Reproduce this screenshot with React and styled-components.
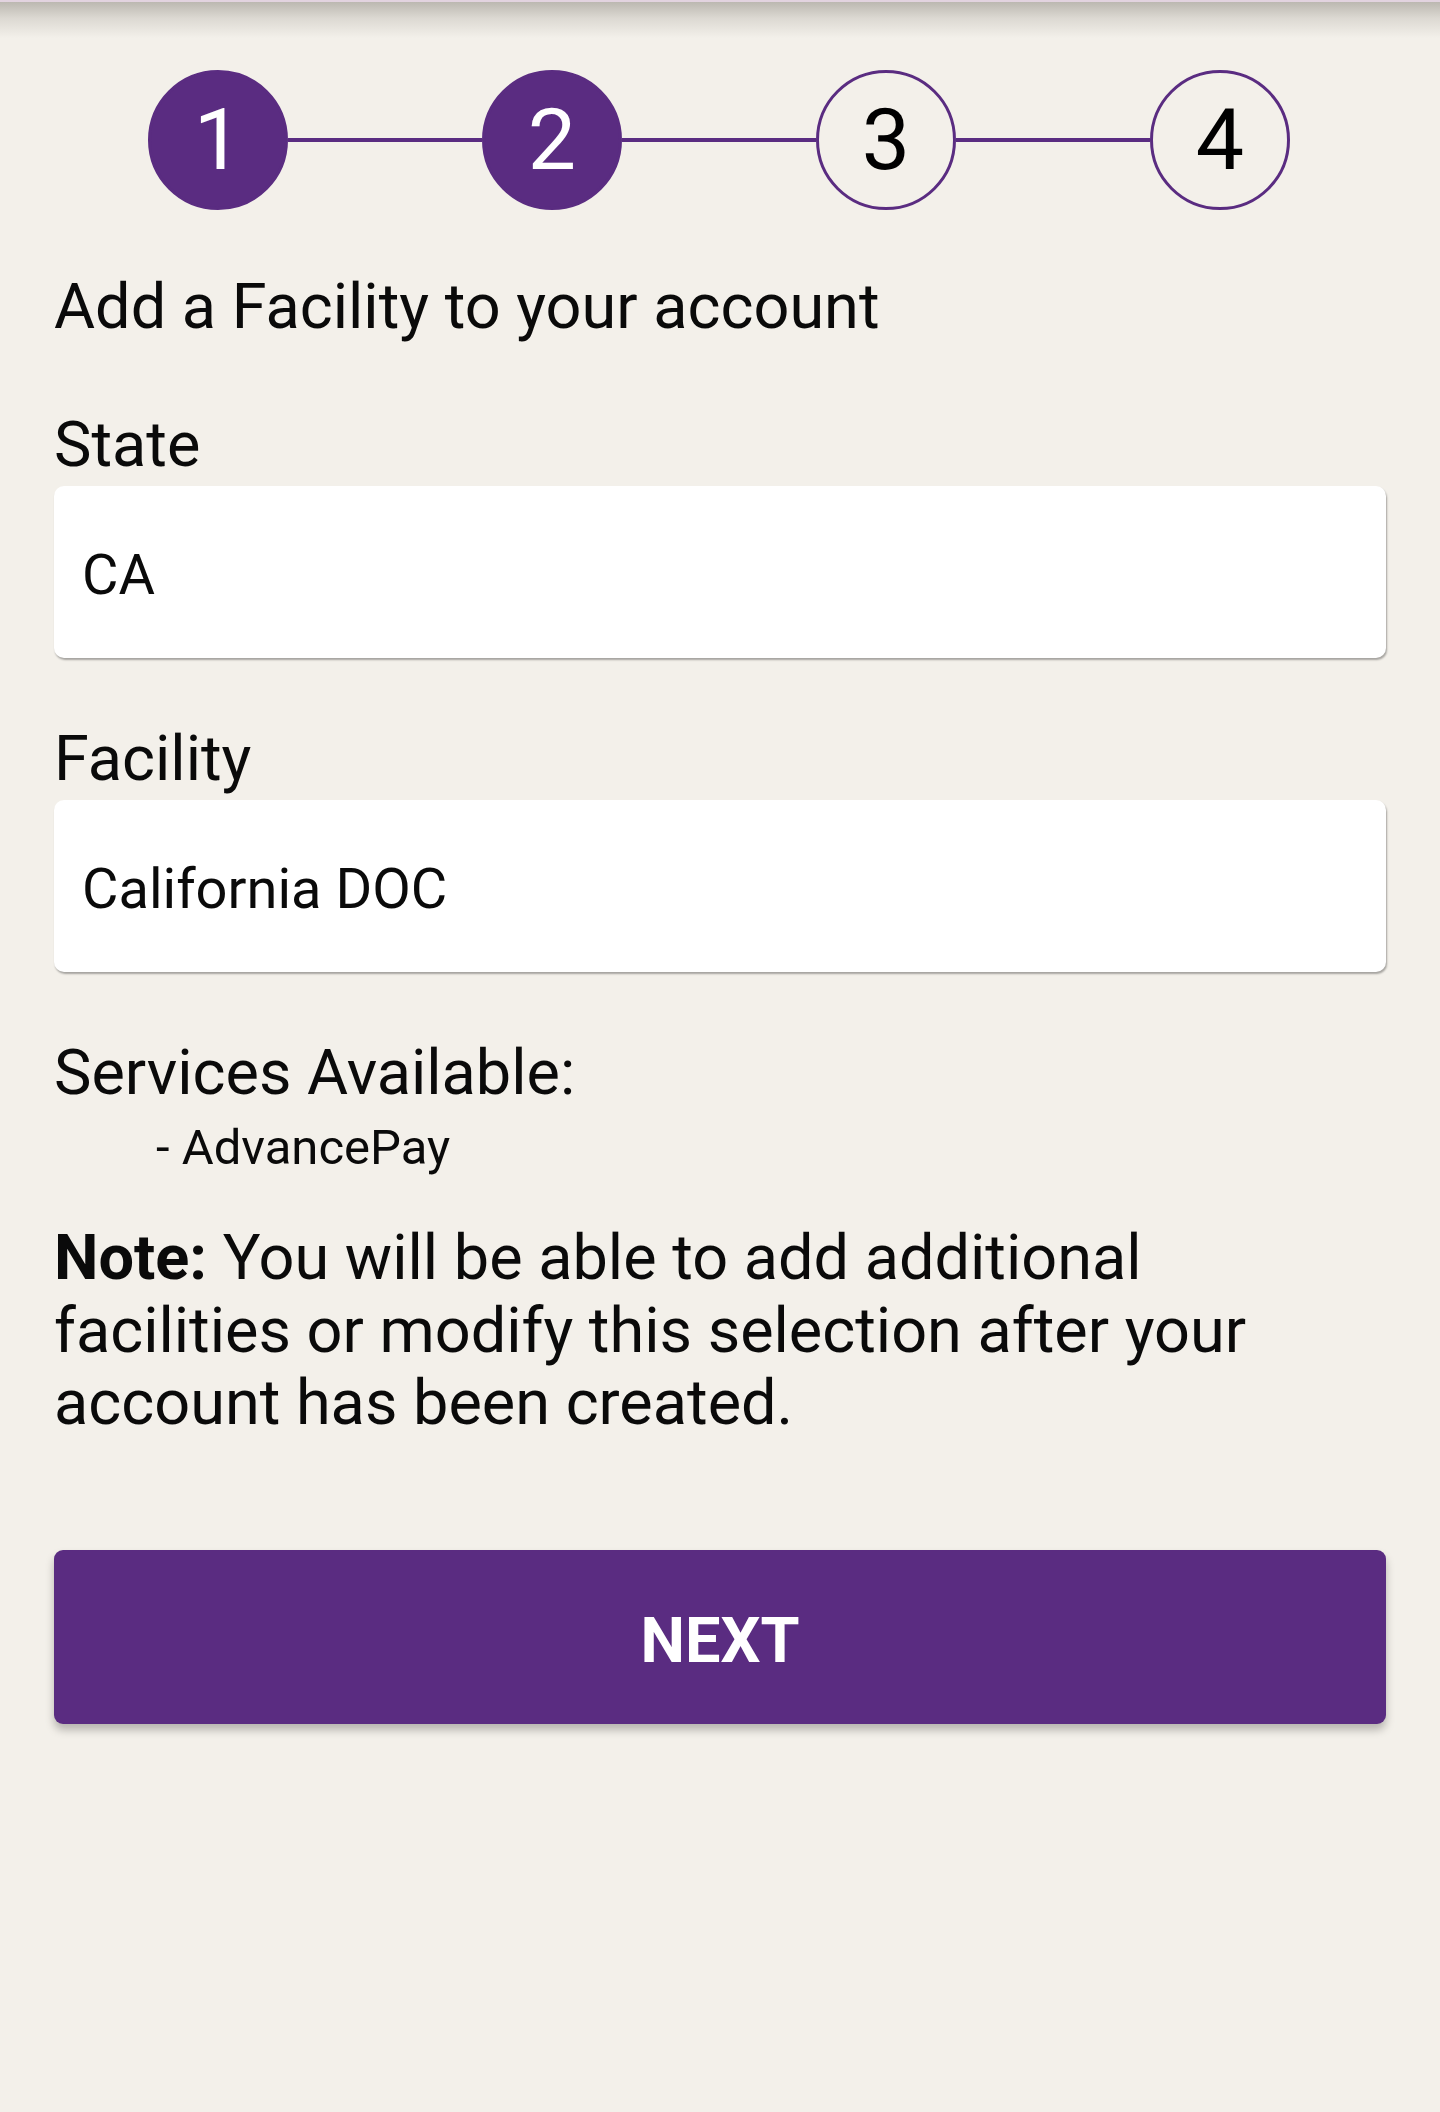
import React from 'react';
import styled, { createGlobalStyle } from 'styled-components';

const purple = '#5a2c81';

const GlobalStyle = createGlobalStyle`
	html, body {
		margin: 0;
		padding: 0;
		background: #f3f0ea;
	}
	body {
		font-family: Roboto, 'Noto Sans', Arial, sans-serif;
		color: #0a0a0a;
	}
`;

const steps = [
	{ n: 1, done: true },
	{ n: 2, done: true },
	{ n: 3, done: false },
	{ n: 4, done: false },
];

const App = () => {
	return (
		<>
			<GlobalStyle />
			<Page>
				<TopShade />
				<Content>
					<Stepper>
						{steps.map((s, i) => (
							<React.Fragment key={s.n}>
								{i > 0 && <Connector />}
								<Step $done={s.done}>{s.n}</Step>
							</React.Fragment>
						))}
					</Stepper>

					<Title>Add a Facility to your account</Title>

					<Label>State</Label>
					<Field>CA</Field>

					<Label>Facility</Label>
					<Field>California DOC</Field>

					<Services>
						<ServicesTitle>Services Available:</ServicesTitle>
						<ServiceItem>- AdvancePay</ServiceItem>
					</Services>

					<Note>
						<strong>Note:</strong> You will be able to add additional
						<br />
						facilities or modify this selection after your
						<br />
						account has been created.
					</Note>

					<NextButton>NEXT</NextButton>
				</Content>
			</Page>
		</>
	);
};

const Page = styled.div`
	min-height: 2112px;
	background: #f3f0ea;
	display: flex;
	flex-direction: column;
`;

const TopShade = styled.div`
	height: 36px;
	border-top: 2px solid #e2d3df;
	background: linear-gradient(
		to bottom,
		rgba(80, 75, 65, 0.34) 0%,
		rgba(80, 75, 65, 0.14) 45%,
		rgba(80, 75, 65, 0) 100%
	);
`;

const Content = styled.div`
	padding: 32px 54px 0;
	display: flex;
	flex-direction: column;
`;

const Stepper = styled.div`
	display: flex;
	align-items: center;
	padding: 0 96px 0 94px;
`;

const Step = styled.div`
	width: 140px;
	height: 140px;
	box-sizing: border-box;
	flex: none;
	border-radius: 50%;
	border: 3px solid ${purple};
	background: ${(p) => (p.$done ? purple : 'transparent')};
	color: ${(p) => (p.$done ? '#ffffff' : '#000000')};
	display: flex;
	align-items: center;
	justify-content: center;
	font-size: 86px;
	line-height: 1;
`;

const Connector = styled.div`
	flex: 1;
	height: 4px;
	background: ${purple};
`;

const Title = styled.h1`
	margin: 60px 0 0;
	font-size: 63px;
	font-weight: 400;
	line-height: 74px;
`;

const Label = styled.div`
	margin-top: 64px;
	font-size: 63px;
	line-height: 74px;
`;

const Field = styled.div`
	margin-top: 4px;
	height: 172px;
	box-sizing: border-box;
	padding: 6px 28px 0;
	background: #ffffff;
	border-radius: 10px;
	box-shadow: 1px 2px 2px rgba(0, 0, 0, 0.32);
	display: flex;
	align-items: center;
	font-size: 56px;
	color: #0a0a0a;
`;

const Services = styled.div`
	margin-top: 64px;
	display: flex;
	flex-direction: column;
	gap: 8px;
`;

const ServicesTitle = styled.div`
	font-size: 63px;
	line-height: 74px;
`;

const ServiceItem = styled.div`
	padding-left: 102px;
	font-size: 49px;
	line-height: 60px;
`;

const Note = styled.p`
	margin: 44px 0 0;
	font-size: 63px;
	line-height: 72.5px;
	strong {
		font-weight: 700;
	}
`;

const NextButton = styled.button`
	margin-top: 110px;
	height: 174px;
	padding-top: 8px;
	border: none;
	border-radius: 9px;
	background: ${purple};
	color: #ffffff;
	font-family: Roboto, Arial, sans-serif;
	font-size: 63px;
	font-weight: 700;
	box-shadow: 0 6px 8px rgba(0, 0, 0, 0.25);
	cursor: pointer;
`;

export default App;
